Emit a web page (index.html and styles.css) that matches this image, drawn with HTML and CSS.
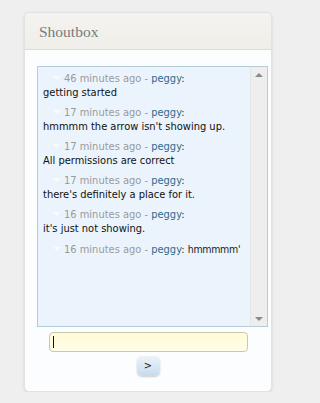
FILE: index.html
```html
<!DOCTYPE html>
<html>
<head>
<meta charset="utf-8">
<link rel="stylesheet" href="styles.css">
</head>
<body>
<div class="panel">
  <div class="panel-head">Shoutbox</div>
  <div class="panel-body">
    <div class="shouts">
      <div class="shout-list">
        <div class="shout">
          <div class="meta"><span class="arrow"></span>46 minutes ago - <a class="user">peggy</a><span class="colon">:</span></div>
          <div class="msg">getting started</div>
        </div>
        <div class="shout">
          <div class="meta"><span class="arrow"></span>17 minutes ago - <a class="user">peggy</a><span class="colon">:</span></div>
          <div class="msg">hmmmm the arrow isn't showing up.</div>
        </div>
        <div class="shout">
          <div class="meta"><span class="arrow"></span>17 minutes ago - <a class="user">peggy</a><span class="colon">:</span></div>
          <div class="msg">All permissions are correct</div>
        </div>
        <div class="shout">
          <div class="meta"><span class="arrow"></span>17 minutes ago - <a class="user">peggy</a><span class="colon">:</span></div>
          <div class="msg">there's definitely a place for it.</div>
        </div>
        <div class="shout">
          <div class="meta"><span class="arrow"></span>16 minutes ago - <a class="user">peggy</a><span class="colon">:</span></div>
          <div class="msg">it's just not showing.</div>
        </div>
        <div class="shout">
          <div class="meta"><span class="arrow"></span>16 minutes ago - <a class="user">peggy</a><span class="colon">:</span> <span class="inline-msg">hmmmmm'</span></div>
        </div>
      </div>
      <div class="scrollbar">
        <span class="sb-up"></span>
        <span class="sb-down"></span>
      </div>
    </div>
    <div class="form">
      <div class="input"><span class="caret"></span></div>
      <div class="send">&gt;</div>
    </div>
  </div>
</div>
</body>
</html>
```

FILE: styles.css
```css
html, body {
  margin: 0;
  padding: 0;
  background: #efefef;
}
body {
  padding: 12px 0 0 24px;
  font-family: "DejaVu Sans Condensed", "DejaVu Sans", sans-serif;
}
.panel {
  width: 246px;
  height: 378px;
  border: 1px solid #e2e2e2;
  border-radius: 5px;
  background: #fcfdff;
  box-shadow: 0 1px 3px rgba(0,0,0,0.12);
  display: flex;
  flex-direction: column;
  overflow: hidden;
}
.panel-head {
  height: 37px;
  flex: none;
  box-sizing: border-box;
  padding: 10px 0 0 14px;
  background: linear-gradient(#f4f3ef, #efeee9);
  border-bottom: 1px solid #dcdcd8;
  font-family: "Liberation Serif", "DejaVu Serif", serif;
  font-size: 15.5px;
  line-height: 18px;
  color: #7a7a7a;
}
.panel-body {
  flex: 1;
  padding: 16px 3px 0 12px;
  display: flex;
  flex-direction: column;
}
.shouts {
  height: 259px;
  border: 1px solid #b5cdd8;
  background: #ebf4fc;
  display: flex;
}
.shout-list {
  flex: 1;
  padding: 5px 0 0 5px;
}
.shout {
  margin-bottom: 6px;
}
.meta {
  font-size: 11px;
  line-height: 14px;
  color: #9a9a9a;
  white-space: nowrap;
}
.arrow {
  display: inline-block;
  vertical-align: middle;
  width: 0;
  height: 0;
  border-left: 4px solid transparent;
  border-right: 4px solid transparent;
  border-top: 4px solid #f8fbfe;
  margin: 0 3px 2px 10px;
}
.user {
  color: #2f6b8e;
  text-decoration: none;
}
.colon {
  color: #333;
}
.inline-msg {
  color: #1a1a1a;
  font-size: 10.5px;
  letter-spacing: -0.3px;
}
.msg {
  font-size: 11px;
  line-height: 14px;
  color: #111;
}
.scrollbar {
  width: 16px;
  background: #eeeeee;
  border-left: 1px solid #e6e6e6;
  display: flex;
  flex-direction: column;
  justify-content: space-between;
  align-items: center;
  padding: 6px 0 5px;
}
.sb-up, .sb-down {
  width: 0;
  height: 0;
  border-left: 4px solid transparent;
  border-right: 4px solid transparent;
}
.sb-up {
  border-bottom: 4px solid #8a8a8a;
}
.sb-down {
  border-top: 4px solid #8a8a8a;
}
.form {
  display: flex;
  flex-direction: column;
  align-items: center;
  padding-right: 9px;
  padding-top: 5px;
}
.input {
  width: 197px;
  height: 18px;
  border: 1px solid #c9c6b4;
  border-radius: 4px;
  background: linear-gradient(#fffbd6, #fffde8);
  display: flex;
  align-items: center;
}
.caret {
  width: 1px;
  height: 12px;
  background: #111;
  margin-left: 3px;
}
.send {
  margin-top: 4px;
  width: 23px;
  height: 20px;
  border-radius: 5px;
  background: linear-gradient(#edf3f9, #c6dbee);
  box-shadow: 0 1px 2px rgba(0,0,0,0.2);
  font-size: 11px;
  line-height: 20px;
  text-align: center;
  color: #222;
}
```
